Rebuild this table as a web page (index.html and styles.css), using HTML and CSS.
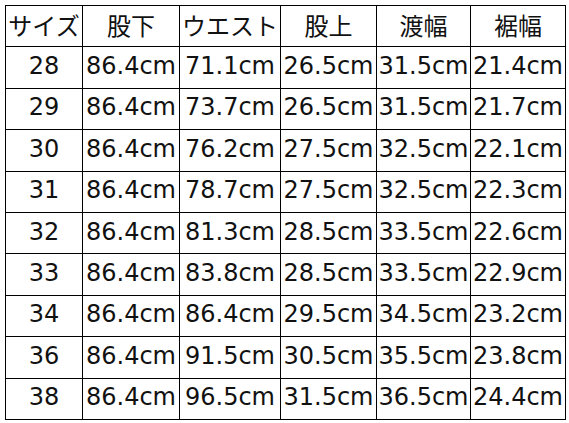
FILE: index.html
```html
<!DOCTYPE html>
<html lang="ja">
<head>
<meta charset="utf-8">
<link rel="stylesheet" href="styles.css">
</head>
<body>
<table class="size-table">
  <colgroup>
    <col class="c1"><col class="c2"><col class="c3"><col class="c4"><col class="c5"><col class="c6">
  </colgroup>
  <thead>
    <tr><th>サイズ</th><th>股下</th><th>ウエスト</th><th>股上</th><th>渡幅</th><th>裾幅</th></tr>
  </thead>
  <tbody>
    <tr><td>28</td><td>86.4cm</td><td>71.1cm</td><td>26.5cm</td><td>31.5cm</td><td>21.4cm</td></tr>
    <tr><td>29</td><td>86.4cm</td><td>73.7cm</td><td>26.5cm</td><td>31.5cm</td><td>21.7cm</td></tr>
    <tr><td>30</td><td>86.4cm</td><td>76.2cm</td><td>27.5cm</td><td>32.5cm</td><td>22.1cm</td></tr>
    <tr><td>31</td><td>86.4cm</td><td>78.7cm</td><td>27.5cm</td><td>32.5cm</td><td>22.3cm</td></tr>
    <tr><td>32</td><td>86.4cm</td><td>81.3cm</td><td>28.5cm</td><td>33.5cm</td><td>22.6cm</td></tr>
    <tr><td>33</td><td>86.4cm</td><td>83.8cm</td><td>28.5cm</td><td>33.5cm</td><td>22.9cm</td></tr>
    <tr><td>34</td><td>86.4cm</td><td>86.4cm</td><td>29.5cm</td><td>34.5cm</td><td>23.2cm</td></tr>
    <tr><td>36</td><td>86.4cm</td><td>91.5cm</td><td>30.5cm</td><td>35.5cm</td><td>23.8cm</td></tr>
    <tr><td>38</td><td>86.4cm</td><td>96.5cm</td><td>31.5cm</td><td>36.5cm</td><td>24.4cm</td></tr>
  </tbody>
</table>
</body>
</html>
```
FILE: styles.css
```css
html, body {
  margin: 0;
  padding: 0;
  background: #fff;
}
body {
  padding: 5px 0 0 5px;
}
.size-table {
  border-collapse: collapse;
  table-layout: fixed;
  width: 560px;
  font-family: "DejaVu Sans", "Noto Sans CJK JP", sans-serif;
  font-size: 24px;
  color: #111;
}
.c1 { width: 77px; }
.c2 { width: 97px; }
.c3 { width: 101px; }
.c4 { width: 96px; }
.c5 { width: 94px; }
.c6 { width: 95px; }
.size-table tr {
  height: 41.4px;
}
.size-table th,
.size-table td {
  border: 1px solid #000;
  padding: 0 0 3px 0;
  text-align: center;
  font-weight: normal;
  white-space: nowrap;
  overflow: hidden;
  line-height: 1;
}
.size-table th {
  font-family: "Noto Sans CJK JP", sans-serif;
}
```
